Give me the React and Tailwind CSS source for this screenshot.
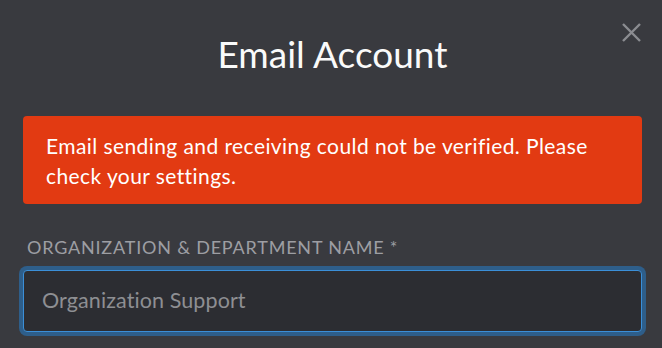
import React from "react";

export default function App() {
  return (
    <div
      className="relative w-[662px] h-[348px] overflow-hidden bg-[#393a3f] pl-[23px] pr-[20px]"
      style={{ fontFamily: "Lato, 'Open Sans', sans-serif" }}
    >
      <button
        type="button"
        aria-label="Close"
        className="absolute top-[23px] right-[21px] w-[19px] h-[19px] text-[#8b8c91]"
      >
        <svg viewBox="0 0 19 19" width="19" height="19" fill="none" stroke="currentColor" strokeWidth="2.4" strokeLinecap="butt">
          <path d="M1 1 L18 18 M18 1 L1 18" />
        </svg>
      </button>

      <h1 className="pt-[32px] text-center text-[37px] leading-[44px] font-normal text-[#fafafa]">
        Email Account
      </h1>

      <div className="mt-[40px] rounded-[4px] bg-[#e23a12] pl-[23px] pr-[20px] pt-[15px] pb-[13px] text-[21px] leading-[30px] tracking-[0.42px] text-white">
        Email sending and receiving could not be verified. Please check your settings.
      </div>

      <label className="block mt-[31px] pl-[4px] text-[18px] leading-[24px] tracking-[0.8px] text-[#9d9ea3]">
        ORGANIZATION &amp; DEPARTMENT NAME *
      </label>

      <input
        type="text"
        placeholder="Organization Support"
        className="mt-[11px] block w-full h-[62px] rounded-[4px] border border-[#3b8fd8] bg-[#2c2d32] pl-[18px] pr-[18px] pb-[2px] text-[21.5px] tracking-[0.1px] text-white placeholder:text-[#8e8f93] outline-none shadow-[0_0_0_4px_#2e5e8a]"
        style={{ fontFamily: "Lato, 'Open Sans', sans-serif" }}
      />
    </div>
  );
}
